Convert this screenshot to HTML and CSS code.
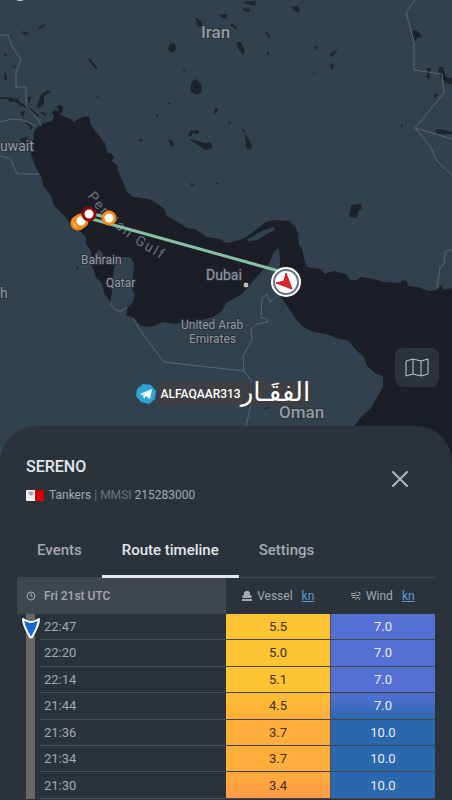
FILE: index.html
```html
<!DOCTYPE html>
<html lang="en">
<head>
    <meta charset="UTF-8">
    <meta name="viewport" content="width=device-width, initial-scale=1.0">
    <title>SERENO - Route timeline</title>
    <link rel="stylesheet" href="styles.css">
</head>
<body>
<main class="app">
    <section class="map">
        <svg class="map-canvas" viewBox="0 0 452 462" role="img" aria-label="Persian Gulf map">
            <rect class="land" width="452" height="462"/>
            <!-- Persian Gulf and Gulf of Oman -->
            <path class="sea" d="M38 127L44 123L52 121L54 117L52 112L55 110L59 112L57 106L61 105L63 108L62 112L59 114L65 117L71 119L74 122L80 118L85 116L89 117L91 125L96 132L101 138L106 145L107 153L111 153L114 157L112 161L117 165L119 173L124 184L127 192L133 197L149 199L158 204L164 209L167 216L176 221L187 228L195 229L207 237L220 239L226 243L237 241L246 237L253 232L258 228L266 222L273 220L289 221L295 226L298 233L299 245L302 249L304 258L307 267L320 269L325 274L333 271L346 274L350 280L357 280L361 277L373 279L384 282L400 283L402 280L407 281L408 286L418 287L429 291L437 290L441 285L443 290L452 288V462H340L353 427L364 414L370 409L383 387L383 376L376 374L367 366L364 357L356 350L349 341L336 338L330 335L314 332L303 327L294 317L288 307L281 297L278 280L280 262L279 249L274 252L270 262L262 271L253 281L242 294L226 303L222 311L213 317L198 321L187 321L176 324L163 322L151 327L141 326L133 317L126 316L128 307L132 303L135 296L132 288L134 263L130 257L120 257L115 261L113 277L112 292L110 302L104 293L102 284L96 277L91 263L91 251L86 244L86 237L81 232L73 228L67 219L60 211L54 206L51 196L43 185L41 176L35 166L31 154L30 147L34 138L34 131Z"/>
            <path class="land" d="M246 240L255 235L262 231L274 227L275 230L265 235L257 240L249 241ZM96 253L99 250L103 253L102 263L98 266ZM275 251L279 248L279 254L280 272L271 268Z"/>
            <!-- lakes and reservoirs -->
            <g class="lake">
                <path d="M195 17L201 21L202 26L198 27ZM170 44L175 43L176 50L171 53L168 49ZM192 81L197 79L201 85L202 92L197 95L190 91ZM190 131L198 130L199 134L193 133L191 137L188 135ZM190 139L198 141L205 143L210 142L213 148L206 150L198 145L191 141ZM168 140L172 140L174 145L171 146ZM214 110L217 107L218 110L215 115ZM166 102L171 103L170 105ZM183 69L186 70L184 72ZM155 114L159 115L157 117ZM97 96L99 95L98 99ZM138 139L143 140L141 142ZM219 15L227 14L226 19L221 17Z"/>
                <path d="M243 2L256 1L255 6L247 4ZM243 8L250 9L249 12L244 11ZM291 7L298 6L300 12L296 12ZM236 42L241 42L245 51L243 55L239 50ZM314 46L318 47L315 50ZM330 54L338 49L334 55L331 57ZM330 63L334 65L333 70L331 68ZM313 69L314 74H313ZM267 51L269 54L267 55ZM413 31L417 30L422 37L417 38L415 42L413 37ZM427 68L431 68L429 79L427 78ZM439 67L443 67L446 77L452 78V84L445 83L438 72ZM434 94L438 94L435 99ZM435 130L440 129L452 132V134L437 134ZM401 123L403 127L401 127ZM245 134L248 138L252 146L250 150L246 148ZM227 122L232 122L229 124ZM242 129L246 131L243 132Z"/>
                <path d="M351 205L361 204L362 208L358 212L357 218L349 217ZM190 183L194 184L192 186ZM215 182L219 183L217 185ZM37 106L41 94L48 90L51 92L44 96L44 104L39 108ZM20 112L25 111L23 118ZM0 97L11 98L15 101L10 102L8 99L0 99ZM28 97L31 97L29 105ZM21 31L25 32L30 33L25 35ZM3 53L8 55L4 57ZM13 65L16 67L14 69ZM20 139L27 137L31 145L24 148ZM76 265L79 268L77 269ZM263 408L270 407L268 409Z"/>
                <path class="stream" d="M38 29L45 25M89 59L97 69M266 32L270 38M231 24L237 29M10 98L25 106L39 116M5 73L6 80M17 98L20 106M41 112L46 115M26 123Q34 126 30 129"/>
            </g>
            <!-- borders -->
            <path class="border" d="M0 35H8L12 46L21 60L16 72V87H26V106L38 119L41 126M0 122L11 119L23 120L36 126M0 156L10 158L17 174H39M111 303Q113 311 121 311L127 307M133 319L145 337L164 362L244 371L243 356L252 340L251 329L257 324L268 322L266 318L261 318L262 298L267 294L270 302L277 296M244 371L252 382L251 405L246 426M415 0L406 12L414 42V70L442 74L444 93L415 128L429 132L452 139M415 128L430 146L437 161L452 175M437 288L440 268L444 264L445 252L452 249"/>
            <!-- place names -->
            <defs><path id="gulf-curve" d="M87 196Q114 236 174 266"/></defs>
            <text class="gulf"><textPath href="#gulf-curve">Persian Gulf</textPath></text>
            <g class="place">
                <text class="country" x="201" y="38">Iran</text>
                <text class="country" x="279" y="418">Oman</text>
                <text class="region" x="0" y="151">uwait</text>
                <text class="city" x="81" y="264">Bahrain</text>
                <text class="city" x="106" y="287">Qatar</text>
                <text class="region" x="206" y="280">Dubai</text>
                <text class="region" x="0" y="298">h</text>
                <text class="city" x="181" y="329">United Arab</text>
                <text class="city" x="189" y="343">Emirates</text>
            </g>
            <circle cx="246" cy="285" r="3" fill="#b9bcc3" stroke="#1b1e27"/>
            <circle cx="20" cy="-6" r="7" fill="#d8dde0"/>
            <!-- vessel track -->
            <path class="track" d="M108 218L90 213L80 222M92 219L286 273"/>
            <g class="stop">
                <circle cx="78" cy="223" r="6"/>
                <circle cx="81" cy="221" r="6"/>
                <circle class="stop-last" cx="89" cy="214" r="6"/>
                <circle cx="109" cy="218" r="6"/>
            </g>
            <circle cx="286" cy="282" r="15" fill="#fff"/>
            <circle cx="286" cy="282" r="12" fill="#fff" stroke="#687388" stroke-width="2"/>
            <path d="M286 273L292 289L276 283L284 281Z" fill="#e3262b" stroke="#b5222a" stroke-width="1" stroke-linejoin="round"/>
        </svg>
        <div class="watermark">
            <svg class="telegram" viewBox="0 0 20 20" aria-hidden="true">
                <path d="M7 0L15 1L20 7L19 15L13 20L5 18L0 12L1 5Z" fill="#2ca5d3"/>
                <path d="M4 10L16 5L14 15L10 12L8 15L7 11L13 7L6 11Z" fill="#fff"/>
            </svg>
            <span class="handle">ALFAQAAR313</span>
            <span class="arabic" lang="ar" dir="rtl">الفقَـار</span>
        </div>
        <button class="layers" type="button" aria-label="Map layers">
            <svg viewBox="0 0 24 20" aria-hidden="true">
                <path d="M1 3L8 1L16 3L23 1V16L16 18L8 16L1 18ZM8 1V16M16 3V18"/>
            </svg>
        </button>
    </section>

    <section class="panel">
        <header class="vessel">
            <div>
                <h1>SERENO</h1>
                <p class="details">
                    <svg class="flag" viewBox="0 0 18 11" aria-hidden="true">
                        <rect width="18" height="11" rx="1" fill="#f4f4f4"/>
                        <path d="M9 0H17Q18 0 18 1V10Q18 11 17 11H9Z" fill="#d40000"/>
                        <path d="M5 1V6M2 3H8M3 2L7 5M7 2L3 5" stroke="#999" stroke-width="1"/>
                    </svg>
                    <span>Tankers <span class="muted">| MMSI</span> 215283000</span>
                </p>
            </div>
            <button class="close" type="button" aria-label="Close">
                <svg viewBox="0 0 18 18" aria-hidden="true"><path d="M2 2L16 16M16 2L2 16"/></svg>
            </button>
        </header>

        <nav class="tabs">
            <button type="button">Events</button>
            <button class="active" type="button">Route timeline</button>
            <button type="button">Settings</button>
        </nav>

        <table class="timeline">
            <colgroup>
                <col class="col-rail">
                <col>
                <col class="col-value">
                <col class="col-value">
            </colgroup>
            <thead>
            <tr>
                <th class="day" colspan="2" scope="col">
                    <div class="head">
                        <svg class="clock" viewBox="0 0 10 10" aria-hidden="true"><circle cx="5" cy="5" r="4"/><path d="M5 2V5L7 6"/></svg>
                        <span>Fri 21st UTC</span>
                    </div>
                </th>
                <th scope="col">
                    <div class="head unit">
                        <svg viewBox="0 0 10 10" aria-hidden="true"><path d="M3 0H7V1H8V4L10 5L9 7H1L0 5L2 4V1H3ZM0 8H10V10H0Z"/></svg>
                        <span>Vessel</span>
                        <a href="#">kn</a>
                    </div>
                </th>
                <th scope="col">
                    <div class="head unit">
                        <svg class="wind" viewBox="0 0 20 20" aria-hidden="true"><path d="M0 5H9Q12 4 10 1M0 9H15Q19 8 18 4Q16 1 14 4M2 13H9Q13 15 9 18M12 13H16Q19 15 16 18"/></svg>
                        <span>Wind</span>
                        <a href="#">kn</a>
                    </div>
                </th>
            </tr>
            </thead>
            <tbody>
            <tr>
                <td class="rail">
                    <svg class="marker" viewBox="0 0 18 22" aria-hidden="true"><path d="M1 2Q6 5 9 5Q12 5 17 2Q17 8 10 20Q9 21 8 20Q1 8 1 2Z"/></svg>
                </td>
                <td class="time">22:47</td><td class="speed">5.5</td><td class="wind-low">7.0</td>
            </tr>
            <tr><td class="rail"></td><td class="time">22:20</td><td class="speed">5.0</td><td class="wind-low">7.0</td></tr>
            <tr><td class="rail"></td><td class="time">22:14</td><td class="speed">5.1</td><td class="wind-low">7.0</td></tr>
            <tr><td class="rail"></td><td class="time">21:44</td><td class="speed speed-drop">4.5</td><td class="wind-rise">7.0</td></tr>
            <tr><td class="rail"></td><td class="time">21:36</td><td class="speed speed-mid">3.7</td><td class="wind-high">10.0</td></tr>
            <tr><td class="rail"></td><td class="time">21:34</td><td class="speed speed-mid">3.7</td><td class="wind-high">10.0</td></tr>
            <tr><td class="rail"></td><td class="time">21:30</td><td class="speed speed-low">3.4</td><td class="wind-high">10.0</td></tr>
            </tbody>
        </table>
    </section>
</main>
</body>
</html>
```
FILE: styles.css
```css
* {
    box-sizing: border-box;
}
body {
    margin: 0;
    font-family: Roboto, sans-serif;
    background-color: #2a333b;
    color: #a5a8af;
}
button {
    margin: 0;
    padding: 0;
    border: 0;
    background: none;
    color: inherit;
    font: inherit;
}

/* map */
.map {
    position: relative;
}
.map-canvas {
    display: block;
    width: 100%;
}
.land {
    fill: #32414e;
}
.sea {
    fill: #1b1e27;
}
.lake {
    fill: #1d232d;
}
.stream {
    fill: none;
    stroke: #1d232d;
    stroke-width: 2;
}
.border {
    fill: none;
    stroke: #596772;
    stroke-width: 1;
}
.place {
    fill: #959aa3;
    stroke: #2a323d;
    stroke-width: 2;
    paint-order: stroke;
}
.country {
    font-size: 17px;
    font-weight: 500;
}
.region {
    font-size: 14px;
}
.city {
    font-size: 12px;
}
.gulf {
    fill: #6b717b;
    font-size: 14px;
    letter-spacing: 2px;
}
.track {
    fill: none;
    stroke: #86bfa3;
    stroke-width: 3;
}
.stop {
    fill: #fff;
    stroke: #f28a1d;
    stroke-width: 3;
}
.stop-last {
    stroke: #8f0710;
}
.watermark {
    position: absolute;
    left: 30%;
    top: 382px;
    display: flex;
    align-items: center;
}
.telegram {
    width: 20px;
    height: 20px;
    margin-right: 2px;
}
.handle, .arabic {
    height: 24px;
    background-color: #3d3f43;
    color: #fff;
}
.handle {
    padding-left: 3px;
    font-size: 12px;
    font-weight: 500;
    line-height: 24px;
}
.arabic {
    font-family: "DejaVu Sans", sans-serif;
    font-size: 26px;
    line-height: 20px;
}
.layers {
    position: absolute;
    right: 13px;
    top: 348px;
    display: flex;
    align-items: center;
    justify-content: center;
    width: 44px;
    height: 39px;
    border-radius: 8px;
    background-color: #2a333b;
}
.layers svg {
    width: 24px;
    height: 20px;
    fill: none;
    stroke: #c5c8ce;
    stroke-width: 1;
    stroke-linejoin: round;
}

/* bottom panel */
.panel {
    position: relative;
    margin-top: -36px;
    padding: 29px 17px 0;
    border-radius: 36px 36px 0 0;
    background-color: #2a333b;
}
.vessel {
    display: flex;
    align-items: center;
    justify-content: space-between;
    padding: 0 26px 0 9px;
}
h1 {
    margin: 0;
    color: #e4e6eb;
    font-size: 16px;
    font-weight: 500;
    line-height: 24px;
}
.details {
    display: flex;
    align-items: center;
    gap: 5px;
    margin: 8px 0 0;
    font-size: 12px;
    line-height: 16px;
}
.flag {
    width: 18px;
    height: 11px;
}
.muted {
    color: #6b727b;
}
.close {
    display: flex;
}
.close svg {
    width: 18px;
    height: 18px;
    fill: none;
    stroke: #b4b7bd;
    stroke-width: 2;
    stroke-linecap: round;
}
.tabs {
    display: flex;
    margin-top: 21px;
    border-bottom: 1px solid #3d454d;
}
.tabs button {
    height: 54px;
    margin-bottom: -1px;
    padding: 0 20px;
    border-bottom: 3px solid transparent;
    font-size: 15px;
    font-weight: 500;
}
.tabs .active {
    border-color: #e4e6f0;
    color: #e4e6eb;
}

/* timeline table */
.timeline {
    width: 100%;
    height: 221px;
    border-collapse: collapse;
    table-layout: fixed;
    font-size: 13px;
}
.col-rail {
    width: 23px;
}
.col-value {
    width: 25%;
}
th, td {
    padding: 0;
    text-align: center;
}
th {
    height: 36px;
    font-size: 12px;
    font-weight: 400;
}
.day {
    background-color: #40464f;
    font-weight: 500;
}
.head {
    display: flex;
    align-items: center;
    gap: 8px;
    padding-left: 9px;
}
.unit {
    justify-content: center;
    gap: 5px;
    padding: 0;
}
.unit a {
    margin-left: 4px;
    color: #5b9bd5;
}
.head svg {
    width: 10px;
    height: 10px;
    fill: #a5a8af;
}
.head .clock, .head .wind {
    fill: none;
    stroke: #a5a8af;
    stroke-width: 1;
}
.head .wind {
    stroke-width: 2;
}
.rail {
    position: relative;
    background: linear-gradient(#696866, #696866) 9px 0 / 9px 100% no-repeat;
}
.marker {
    position: absolute;
    top: 3px;
    left: 5px;
    width: 18px;
    height: 22px;
    fill: #1769d2;
    stroke: #fff;
    stroke-width: 2;
    stroke-linejoin: round;
}
.time {
    padding-left: 4px;
    border-bottom: 1px solid #46515b;
    text-align: left;
}
.speed, .wind-low, .wind-rise, .wind-high {
    border-bottom: 1px solid #46464a;
    color: #e9edf7;
}
.speed {
    border-right: 1px solid #46515b;
    background-color: #fcc332;
    color: #3a3022;
}
.speed-drop {
    background: linear-gradient(#fdbd34, #ffae3b);
}
.speed-mid {
    background: #ffae3b;
}
.speed-low {
    background: linear-gradient(#ffac3c, #ff9a47);
}
.wind-low {
    background-color: #5470d5;
}
.wind-rise {
    background: linear-gradient(#5470d5, #2a68ad);
}
.wind-high {
    background-color: #2a68ad;
}
```
